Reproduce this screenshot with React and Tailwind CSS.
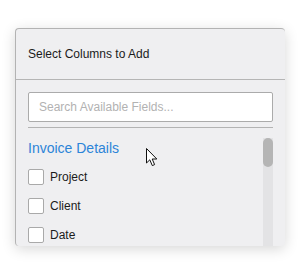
import React from "react";

function Cursor() {
  return (
    <svg className="absolute left-[145px] top-[147px]" width="14" height="21" viewBox="0 0 14 21">
      <path d="M1.5 1.5 L1.5 16 L4.8 12.8 L7.3 18.6 L9.6 17.6 L7.2 12 L11.8 12 Z" fill="#fff" stroke="#111" strokeWidth="1" strokeLinejoin="round" />
    </svg>
  );
}

function Row({ label }) {
  return (
    <div className="flex items-center h-[29px]">
      <div className="w-[16px] h-[16px] bg-white border border-[#a9a9a9] rounded-[2px]" />
      <span className="ml-[6px] text-[12px] text-[#1b1b1b]">{label}</span>
    </div>
  );
}

export default function App() {
  return (
    <div className="w-[303px] h-[274px] bg-white relative overflow-hidden" style={{ fontFamily: '"Liberation Sans", Arial, sans-serif' }}>
      <div className="ml-[15px] mt-[28px] w-[270px] h-[218px] bg-[#efeff1] border-t border-l border-[#b3b3b3] rounded-[4px] shadow-[0_3px_14px_rgba(0,0,0,0.16)] overflow-hidden flex flex-col">
        <div className="h-[51px] shrink-0 border-b border-[#b5b5b5] flex items-center pl-[12px]">
          <span className="text-[12px] text-[#1b1b1b]">Select Columns to Add</span>
        </div>
        <div className="pl-[12px] pr-[12px] pt-[12px] flex flex-col flex-1 min-h-0">
          <div className="h-[30px] bg-white border border-[#ababab] rounded-[2px] flex items-center pl-[10px] shrink-0">
            <span className="text-[12px] text-[#b2b2b2]">Search Available Fields...</span>
          </div>
          <div className="mt-[5px] h-px bg-[#b3b3b3] shrink-0" />
          <div className="flex flex-1 min-h-0 pt-[10px]">
            <div className="flex-1">
              <div className="h-[20px] flex items-center text-[14px] text-[#2c84d8]">Invoice Details</div>
              <div className="mt-[4px]">
                <Row label="Project" />
                <Row label="Client" />
                <Row label="Date" />
              </div>
            </div>
            <div className="w-[10px] bg-[#e3e3e5] flex flex-col">
              <div className="h-[29px] bg-[#b5b5b5] rounded-full" />
            </div>
          </div>
        </div>
      </div>
      <Cursor />
    </div>
  );
}
